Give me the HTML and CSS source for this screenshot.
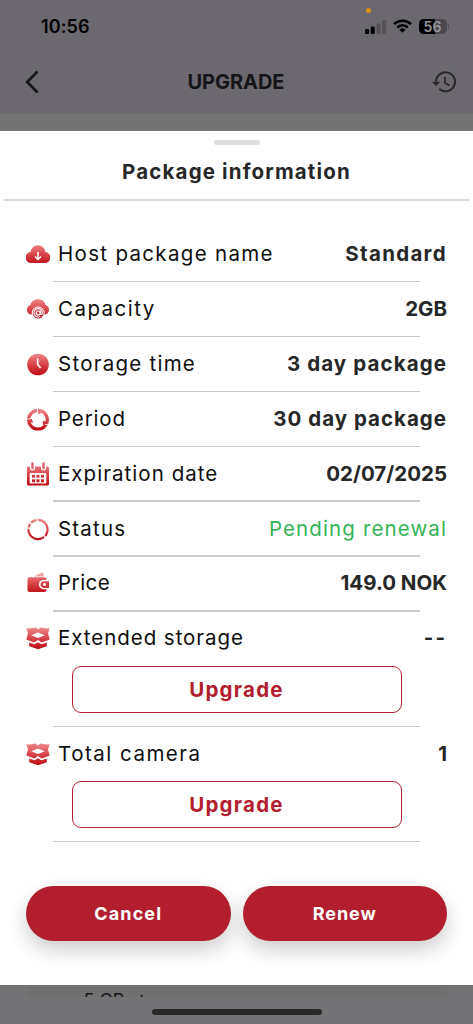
FILE: index.html
```html
<!DOCTYPE html>
<html lang="en">
<head>
<meta charset="utf-8">
<title>Upgrade</title>
<link rel="stylesheet" href="styles.css">
</head>
<body>
<svg class="defs" width="0" height="0" aria-hidden="true">
  <defs>
    <linearGradient id="red" gradientUnits="userSpaceOnUse" x1="0" y1="1" x2="0" y2="23"><stop offset="0" stop-color="#f28b8d"/><stop offset=".5" stop-color="#d9474b"/><stop offset="1" stop-color="#bd0b13"/></linearGradient>
    <symbol id="box" viewBox="0 0 24 24">
      <path d="M3.200 2.500 9.500 1.500 12 3.500l2.500-2 6.300 1 2.900-.3-1.700 5 1.700 6.300-8 3-3.700-2.500-3.700 2.500-8-3L2 7.200.3 2.200z" fill="url(#red)"/>
      <path d="M12 6.500l6.800 2.700L12 12 5.200 9.200z" fill="#fff"/>
      <path d="M3.200 16.500l5.300 1.800 3.500-2 3.500 2 5.300-1.800v3.800L12 23.300l-8.800-3z" fill="url(#red)"/>
    </symbol>
  </defs>
</svg>
<div class="screen">
  <header class="top">
    <div class="status">
      <span class="clock">10:56</span>
      <span class="mic"></span>
      <svg class="signal" width="22" height="14" viewBox="0 0 22 14"><rect x="0" y="9" width="4" height="5" rx="1.200"/><rect x="5.700" y="6.500" width="4" height="7.500" rx="1.200"/><g fill="#535056"><rect x="11.500" y="3.500" width="4" height="10.500" rx="1.200"/><rect x="17.200" y="0" width="4" height="14" rx="1.200"/></g></svg>
      <svg class="wifi" width="19" height="14" viewBox="0 0 19 14"><g fill="none" stroke="#000" stroke-width="2.500"><path d="M1 5.200a12.200 12.200 0 0 1 17 0"/><path d="M4.200 8.500a7.600 7.600 0 0 1 10.600 0"/></g><path d="M6.400 10.700a4.500 4.500 0 0 1 6.200 0L9.500 13.800z"/></svg>
      <span class="battery">56</span><span class="battery-tip"></span>
    </div>
    <div class="nav">
      <svg width="14" height="24" viewBox="0 0 14 24" fill="none" stroke="#17171a" stroke-width="2.700"><path d="M12.500 1.500 2.200 12l10.300 10.500"/></svg>
      <span class="nav-title">UPGRADE</span>
      <svg width="24" height="22" viewBox="0 0 24 22"><path d="M4 10.500a9.500 9.500 0 1 1 3.300 7.500" fill="none" stroke="#29272c" stroke-width="2"/><path d="M0 10.700h8.200L4.100 15z" fill="#29272c"/><path d="M13 6v6l4.600 2.400" fill="none" stroke="#29272c" stroke-width="1.700"/></svg>
    </div>
  </header>
  <div class="gap"></div>
  <main class="sheet">
    <div class="grip"></div>
    <h1 class="title">Package information</h1>
    <div class="rows">
      <section class="row"><div class="line">
        <svg class="icon" viewBox="0 0 24 24"><path d="M5.500 21A5.300 5.300 0 0 1 4.700 10C5 6.200 8 3.200 12 3.200S19 6.200 19.300 10a5.300 5.300 0 0 1-.8 11z" fill="url(#red)"/><path d="M12 10v7M9 14.500l3 3 3-3" fill="none" stroke="#fff" stroke-width="1.500"/></svg>
        <span class="label l-host">Host package name</span><strong class="value v-host">Standard</strong></div></section>
      <section class="row"><div class="line">
        <svg class="icon" viewBox="0 0 24 24"><path d="M5 17.500A4.900 4.900 0 0 1 4.500 8C5 4.500 8 2.200 12 2.200s7 2.300 7.500 5.800a4.900 4.900 0 0 1-.5 9.500z" fill="url(#red)"/><circle cx="12.200" cy="16" r="6.500" fill="#fff"/><circle cx="12.200" cy="16" r="5.500" fill="url(#red)"/><circle cx="12.200" cy="16" r="2" fill="none" stroke="#fff" stroke-width="1.200"/><path d="M14.300 13.800v2.700c0 1.500 2 1.500 2-.8a4.200 4.200 0 1 0-2 3.700" fill="none" stroke="#fff" stroke-width="1.100"/></svg>
        <span class="label l-cap">Capacity</span><strong class="value v-cap">2GB</strong></div></section>
      <section class="row"><div class="line">
        <svg class="icon" viewBox="0 0 24 24"><circle cx="12" cy="12.500" r="10.800" fill="url(#red)"/><path d="M11.700 6.500v6l2.900 3.500" fill="none" stroke="#fff" stroke-width="1.700"/></svg>
        <span class="label l-store">Storage time</span><strong class="value v-store">3 day package</strong></div></section>
      <section class="row"><div class="line">
        <svg class="icon" viewBox="0 0 24 24"><circle cx="12" cy="12.700" r="9.300" fill="none" stroke="url(#red)" stroke-width="3.200"/><path d="M12 .8l4 3.800-3.600 3zM22.800 15.200l-5.500 3-.7-4.500zM1 13.500l4.700-1.800 1.500 4.300z" fill="url(#red)"/><path d="M11.500 1.500v4.200M22.500 17l-3.500.8M1 12.300l4.200-1" stroke="#fff" stroke-width=".9"/></svg>
        <span class="label l-period">Period</span><strong class="value v-period">30 day package</strong></div></section>
      <section class="row"><div class="line">
        <svg class="icon" viewBox="0 0 24 24"><path d="M2.500 4.500h19q1.500 0 1.500 1.500v16q0 1.500-1.500 1.500h-19Q1 23.500 1 22V6q0-1.500 1.500-1.500z" fill="url(#red)"/><path d="M6.500 2v4M17.500 2v4" stroke="#fff" stroke-width="5" stroke-linecap="round"/><path d="M6.500 1.500V6M17.500 1.500V6" stroke="#dd6569" stroke-width="2.400" stroke-linecap="round"/><rect x="3.700" y="11" width="16.600" height="10.500" rx="1" fill="#fff"/><g fill="url(#red)"><path d="M6 12.800h3v3H6zM10.500 12.800h3v3h-3zM15 12.800h3v3h-3zM6 17.300h3v3H6zM10.500 17.300h3v3h-3zM15 17.300h3v3h-3z"/></g></svg>
        <span class="label l-exp">Expiration date</span><strong class="value v-exp">02/07/2025</strong></div></section>
      <section class="row"><div class="line">
        <svg class="icon" viewBox="0 0 24 24"><circle cx="12" cy="12.500" r="9.600" fill="none" stroke="url(#red)" stroke-width="2.100"/><path d="M11.300 1v4M.8 11l4 .4M19.500 20.500l-2.600-3M3 5l3 2.500" stroke="#fff" stroke-width="1.300"/></svg>
        <span class="label l-status">Status</span><span class="value pending v-status">Pending renewal</span></div></section>
      <section class="row"><div class="line">
        <svg class="icon" viewBox="0 0 24 24"><path d="M8 5.500l7.500-3.800q1.200-.5 1.700.8l.8 3z" fill="#f0a3a5"/><path d="M3.500 6.200h15q2 0 2 2V19q0 2-2 2h-15q-2 0-2-2V8.200q0-2 2-2z" fill="url(#red)"/><path d="M22 9h-4.500a4.600 4.600 0 0 0 0 9.200H22z" fill="#fff"/><path d="M23 10.300h-5a3.300 3.300 0 0 0 0 6.600h5z" fill="url(#red)"/><circle cx="18.500" cy="13.600" r="1.500" fill="#fff"/></svg>
        <span class="label l-price">Price</span><strong class="value v-price">149.0 NOK</strong></div></section>
      <section class="row"><div class="line">
        <svg class="icon"><use href="#box"/></svg>
        <span class="label l-ext">Extended storage</span><strong class="value v-ext">--</strong></div>
        <button class="outline">Upgrade</button></section>
      <section class="row"><div class="line">
        <svg class="icon"><use href="#box"/></svg>
        <span class="label l-cam">Total camera</span><strong class="value v-cam">1</strong></div>
        <button class="outline">Upgrade</button></section>
    </div>
    <div class="actions"><button class="pill">Cancel</button><button class="pill pill-renew">Renew</button></div>
  </main>
  <footer class="bottom">
    <div class="peek"><p class="peek-text"><i>✓</i>5 GB storage</p></div>
    <div class="home"></div>
  </footer>
</div>
</body>
</html>
```
FILE: styles.css
```css
* { box-sizing: border-box; }
body { margin: 0; font-family: Inter, "Noto Sans", sans-serif; background: #737375; }
button { font: inherit; padding: 0; cursor: pointer; }
.defs { position: absolute; }
.screen { width: 473px; height: 1024px; display: flex; flex-direction: column; overflow: hidden; }

.top { height: 114px; background: #6b686f; flex: none; }
.status { height: 52px; display: flex; align-items: center; position: relative; padding-left: 41px; }
.clock { width: 323.500px; font-size: 18px; font-weight: 600; letter-spacing: .1px; }
.mic { position: absolute; left: 365.500px; top: 7.500px; width: 5px; height: 5px; border-radius: 50%; background: #e0901c; }
.signal { margin-top: 1px; }
.wifi { margin-left: 6px; }
.battery { margin-left: 7px; width: 28px; height: 15px; border-radius: 4.500px; background: linear-gradient(90deg, #000 56%, #4b484f 56%); color: #98959b; font-size: 14px; font-weight: 600; line-height: 15px; text-align: center; }
.battery-tip { width: 1.500px; height: 5px; margin-left: 1px; border-radius: 0 2px 2px 0; background: #4b484f; }
.nav { height: 60px; display: flex; align-items: center; justify-content: space-between; padding: 0 17px 0 25px; }
.nav-title { padding-left: 1px; font-size: 20px; font-weight: 700; color: #151517; letter-spacing: -.050px; }
.gap { height: 17px; background: #737374; flex: none; }

.sheet { height: 854px; flex: none; background: #fff; display: flex; flex-direction: column; }
.grip { width: 46px; height: 5px; margin: 9px auto 0; flex: none; border-radius: 3px; background: #dedede; }
.title { margin: 0 4px; height: 56px; padding-top: 14px; border-bottom: 2px solid #d9d9d9; font-size: 20.500px; line-height: 26px; font-weight: 700; text-align: center; color: #262727; letter-spacing: 1.150px; }
.rows { padding-top: 26.400px; }
.row { padding: 0 26px; }
.row::after { content: ""; display: block; height: 1.400px; margin-left: 27px; width: 367px; background: #cbcbcb; }
.line { height: 53.500px; padding-bottom: 1px; display: flex; align-items: center; }
.icon { width: 24px; height: 24px; flex: none; margin-top: 1px; }
.label { margin-left: 8px; font-size: 20.500px; font-weight: 400; color: #0e0f0f; white-space: nowrap; }
.value { margin-left: auto; font-size: 20.500px; font-weight: 700; color: #262727; white-space: nowrap; }
.pending { font-weight: 400; color: #34b457; }

/* per-text tracking */
.l-host { letter-spacing: 1.320px; }
.l-cap { letter-spacing: 1.450px; }
.l-store { letter-spacing: 1.250px; }
.l-period { letter-spacing: .85px; }
.l-exp { letter-spacing: 1.050px; }
.l-status { letter-spacing: 1.200px; }
.l-price { letter-spacing: .5px; }
.l-ext { letter-spacing: .950px; }
.l-cam { letter-spacing: 1.500px; }
.v-host { letter-spacing: 1.300px; }
.v-store { letter-spacing: 1.100px; }
.v-period { letter-spacing: 1px; }
.v-status { letter-spacing: 1.120px; }
.v-ext { letter-spacing: 2px; }
.label + .v-cap { letter-spacing: 0; }

.outline { display: block; width: 330px; height: 47px; margin: .5px 0 13px 45.500px; border: 1px solid #b72134; border-radius: 9px; background: #fff; color: #b21e30; font-size: 20.500px; font-weight: 700; letter-spacing: 1.200px; }
.actions { display: flex; gap: 12px; padding: 44px 26px 0; }
.pill { flex: 1; height: 55px; padding-bottom: 1px; border: 0; border-radius: 28px; background: #b21e2e; color: #fff; font-size: 18px; font-weight: 700; letter-spacing: 1.100px; box-shadow: 0 9px 20px rgba(0,0,0,.2); }
.pill-renew { letter-spacing: .9px; }

.bottom { flex: 1; background: #737375; }
.peek { width: 420px; height: 12px; margin-left: 27px; overflow: hidden; background: #707070; }
.peek-text { margin: 0; padding: 6px 0 0 44px; font-size: 18px; line-height: 20px; color: #171717; }
.peek-text i { font-style: normal; font-size: 14px; color: #17632e; }
.home { width: 170px; height: 6px; margin: 12px auto 0; border-radius: 3px; background: #292929; }
```
